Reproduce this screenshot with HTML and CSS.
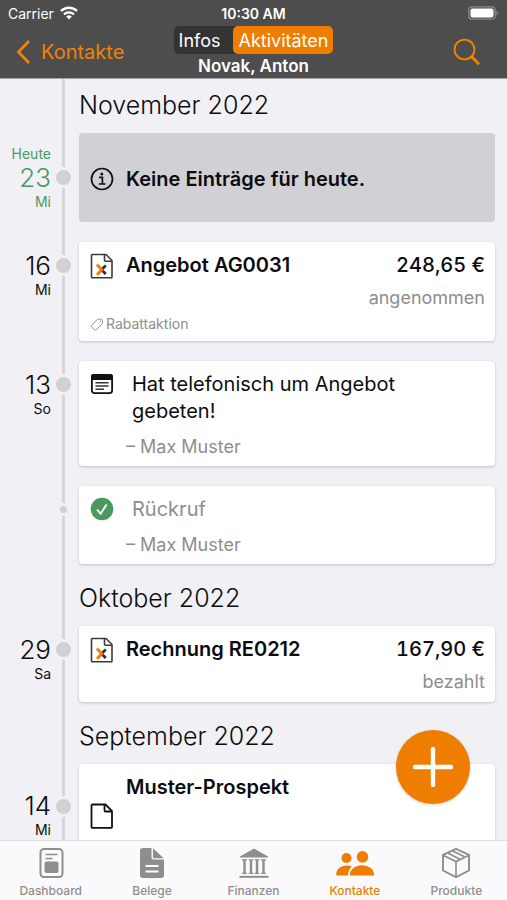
FILE: index.html
```html
<!DOCTYPE html>
<html lang="de">
<head>
<meta charset="utf-8">
<meta name="viewport" content="width=device-width, initial-scale=1">
<title>Novak, Anton</title>
<link rel="stylesheet" href="styles.css">
</head>
<body>
<svg class="symbols" aria-hidden="true">
  <symbol id="doc-x" viewBox="0 0 24 26">
    <path d="M2 1.500h14l6 6V24a.8.8 0 0 1-.8.8H2.300a.8.8 0 0 1-.8-.8V2.300a.8.8 0 0 1 .8-.8z" fill="none" stroke="#3c3c3c" stroke-width="1.600"/>
    <path d="M14.500 1.500v5.700a1 1 0 0 0 1 1H22" fill="none" stroke="#3c3c3c" stroke-width="1.600"/>
    <path d="M11.500 16.700l4.300-4.200M11.500 16.700l4.300 4.300" fill="none" stroke="#333" stroke-width="2.800"/>
    <path d="M6.500 12.700H8l3.700 4L8 20.800H6.500" fill="none" stroke="#ef7d00" stroke-width="2.800"/>
  </symbol>
</svg>
<div class="app">
  <header class="top">
    <div class="status">
      <span class="carrier">Carrier
        <svg width="18" height="14" viewBox="0 0 18 14" aria-hidden="true"><path d="M1 5a11.500 11.500 0 0 1 16 0" fill="none" stroke="#fff" stroke-width="2.400"/><path d="M4 8.300a7.200 7.200 0 0 1 10 0" fill="none" stroke="#fff" stroke-width="2.300"/><path d="M6.200 10.600a4 4 0 0 1 5.600 0L9 13.600z" fill="#fff"/></svg>
      </span>
      <time class="clock">10:30 AM</time>
      <svg class="battery" width="31" height="14" viewBox="0 0 31 14" aria-hidden="true"><rect x=".8" y=".8" width="26.400" height="12.400" rx="3.500" fill="none" stroke="#8b8b8b" stroke-width="1.200"/><rect x="2.500" y="2.500" width="23" height="9" rx="2" fill="#fff"/><path d="M28.500 4.500c2 .8 2 4.200 0 5z" fill="#8b8b8b"/></svg>
    </div>
    <div class="navbar">
      <a class="back" href="#">
        <svg width="15" height="26" viewBox="0 0 15 26" aria-hidden="true"><path d="M13 2L2.500 13 13 24" fill="none" stroke="#f08300" stroke-width="2.800"/></svg>
        Kontakte
      </a>
      <div class="middle">
        <div class="segments">
          <button class="segment" type="button" aria-pressed="false">Infos</button>
          <button class="segment active" type="button" aria-pressed="true">Aktivitäten</button>
        </div>
        <h1 class="title">Novak, Anton</h1>
      </div>
      <button class="search" type="button" aria-label="Suchen">
        <svg width="28" height="28" viewBox="0 0 28 28" aria-hidden="true"><circle cx="11.500" cy="11.500" r="9.900" fill="none" stroke="#f08300" stroke-width="1.800"/><path d="M18.500 18.500l7.500 7.800" stroke="#f08300" stroke-width="2.800"/></svg>
      </button>
    </div>
  </header>

  <main class="timeline">
    <section class="month">
      <h2 class="month-name">November 2022</h2>
      <ol class="entries">
        <li class="entry centered">
          <div class="date today"><span class="weekday">Heute</span><span class="day">23</span><span class="weekday">Mi</span></div>
          <span class="dot"></span>
          <article class="card notice">
            <svg class="icon" width="24" height="24" viewBox="0 0 24 24" aria-hidden="true"><circle cx="12" cy="12" r="10.500" fill="none" stroke="#111" stroke-width="1.700"/><circle cx="11.800" cy="7" r="1.500" fill="#111"/><path d="M9 10.300h3.400v6.500M8.800 17h6.700" fill="none" stroke="#111" stroke-width="1.700"/></svg>
            <h3 class="headline">Keine Einträge für heute.</h3>
          </article>
        </li>
        <li class="entry">
          <div class="date"><span class="day">16</span><span class="weekday">Mi</span></div>
          <span class="dot"></span>
          <article class="card">
            <svg class="icon" width="24" height="26" aria-hidden="true"><use href="#doc-x"/></svg>
            <h3 class="headline">Angebot AG0031</h3>
            <p class="amount">248,65 €</p>
            <p class="state">angenommen</p>
            <p class="tag">
              <svg width="14" height="14" viewBox="0 0 14 14" aria-hidden="true"><path d="M1.500 8.300L7.300 2.500Q8 2 9 2l2.300.3q1 .2 1.100 1.100l.1 2.200q0 .9-.6 1.500L6.300 12.600q-.9.700-1.700 0L1.500 9.900q-.7-.8 0-1.600z" fill="none" stroke="#8e8e8e"/><circle cx="10.300" cy="4.300" r=".7" fill="#8e8e8e"/></svg>
              Rabattaktion
            </p>
          </article>
        </li>
        <li class="entry">
          <div class="date"><span class="day">13</span><span class="weekday">So</span></div>
          <span class="dot"></span>
          <article class="card">
            <svg class="icon" width="24" height="24" viewBox="0 0 24 24" aria-hidden="true"><rect x="1.900" y="2.900" width="20.200" height="18.200" rx="2.500" fill="none" stroke="#111" stroke-width="1.800"/><path d="M1 8V4.500A2.500 2.500 0 0 1 3.500 2h17A2.500 2.500 0 0 1 23 4.500V8z" fill="#111"/><path d="M5.500 10.800h13M5.500 14h13M5.500 17.200h8.500" stroke="#333" stroke-width="1.600"/></svg>
            <p class="note">Hat telefonisch um Angebot gebeten!</p>
            <p class="author">– Max Muster</p>
          </article>
        </li>
        <li class="entry">
          <span class="dot small"></span>
          <article class="card">
            <svg class="icon" width="24" height="24" viewBox="0 0 24 24" aria-hidden="true"><circle cx="12" cy="12" r="11.300" fill="#4a9a5d"/><path d="M7 12.500l3.600 4.200L16.600 7.500" fill="none" stroke="#fff" stroke-width="1.900"/></svg>
            <p class="note done">Rückruf</p>
            <p class="author">– Max Muster</p>
          </article>
        </li>
      </ol>
    </section>

    <section class="month">
      <h2 class="month-name">Oktober 2022</h2>
      <ol class="entries">
        <li class="entry">
          <div class="date"><span class="day">29</span><span class="weekday">Sa</span></div>
          <span class="dot"></span>
          <article class="card">
            <svg class="icon" width="24" height="26" aria-hidden="true"><use href="#doc-x"/></svg>
            <h3 class="headline">Rechnung RE0212</h3>
            <p class="amount">167,90 €</p>
            <p class="state">bezahlt</p>
          </article>
        </li>
      </ol>
    </section>

    <section class="month">
      <h2 class="month-name">September 2022</h2>
      <ol class="entries">
        <li class="entry tall">
          <div class="date"><span class="day">14</span><span class="weekday">Mi</span></div>
          <span class="dot"></span>
          <article class="card">
            <svg class="icon" width="24" height="26" viewBox="0 0 24 26" aria-hidden="true"><path d="M2.500 1.500H15.500l6.500 6.500V24a.8.8 0 0 1-.8.8H2.300a.8.8 0 0 1-.8-.8V2.500a1 1 0 0 1 1-1z" fill="none" stroke="#111" stroke-width="1.800"/><path d="M14.500 1.500v6a1 1 0 0 0 1 1H22" fill="none" stroke="#111" stroke-width="1.800"/></svg>
            <h3 class="headline">Muster-Prospekt</h3>
          </article>
        </li>
      </ol>
    </section>
  </main>

  <button class="add" type="button" aria-label="Neue Aktivität">
    <svg width="40" height="40" viewBox="0 0 40 40" aria-hidden="true"><path d="M20 2v36M2 20h36" stroke="#fff" stroke-width="4.400" stroke-linecap="round"/></svg>
  </button>

  <nav class="tabs">
    <a class="tab" href="#">
      <svg width="32" height="32" viewBox="0 0 32 32" aria-hidden="true"><rect x="5.500" y="2" width="22" height="28" rx="3.500" fill="none" stroke="#8e8e8e" stroke-width="2"/><path d="M10.500 7.500h12M10.500 11.500h7" stroke="#8e8e8e" stroke-width="1.500"/><rect x="9.500" y="14.500" width="14" height="11.500" rx="2" fill="#8e8e8e"/></svg>
      Dashboard
    </a>
    <a class="tab" href="#">
      <svg width="32" height="32" viewBox="0 0 32 32" aria-hidden="true"><path d="M4 4a3 3 0 0 1 3-3h8.500v9a2.500 2.500 0 0 0 2.500 2.500h10V28a3 3 0 0 1-3 3H7a3 3 0 0 1-3-3z" fill="#8e8e8e"/><path d="M17 1.200L27.700 11.300H18.500a1.500 1.500 0 0 1-1.500-1.500z" fill="#8e8e8e"/><path d="M9.500 19h13M9.500 24.500h13" stroke="#fff" stroke-width="1.800"/></svg>
      Belege
    </a>
    <a class="tab" href="#">
      <svg width="32" height="32" viewBox="0 0 32 32" aria-hidden="true"><path d="M2 10.500v-1L16 1.500l14 8v1z" fill="#8e8e8e"/><path d="M4 12.900h5M10.700 12.900h4.600M16.700 12.900h4.600M23 12.900h5M4 26.300h5M10.700 26.300h4.600M16.700 26.300h4.600M23 26.300h5" stroke="#8e8e8e" stroke-width="1.300"/><path d="M6.500 12.500V26M13 12.500V26M19 12.500V26M25.500 12.500V26" stroke="#8e8e8e" stroke-width="2.400"/><path d="M1.500 29.800h29" stroke="#8e8e8e" stroke-width="2"/></svg>
      Finanzen
    </a>
    <a class="tab current" href="#" aria-current="page">
      <svg width="40" height="32" viewBox="0 0 40 32" aria-hidden="true"><g fill="#ef7d00"><circle cx="11.500" cy="11" r="5"/><circle cx="27.500" cy="9.800" r="5.800"/><path d="M1.200 27.500C1.500 22 5.500 18.500 11.500 18.500c2.200 0 4 .4 5.400 1.300-2.300 1.900-3.700 4.500-4 8.700H2.200c-.7 0-1-.4-1-1z"/><path d="M14.800 27.300c.6-5.200 5.700-9 12.200-9s11.600 3.800 12.200 9c.1.800-.4 1.200-1.200 1.200H16c-.8 0-1.300-.4-1.200-1.200z"/></g></svg>
      Kontakte
    </a>
    <a class="tab" href="#">
      <svg width="32" height="32" viewBox="0 0 32 32" aria-hidden="true"><path d="M16 1.800l13 6v15.700L16 30.200 3 23.500V7.800z" fill="none" stroke="#8e8e8e" stroke-width="1.900" stroke-linejoin="round"/><path d="M3 8.300l13 6.200 13-6.200M16 14.500v15.500M12.300 3.700l12.200 6M7.700 6l12.300 6.300" fill="none" stroke="#8e8e8e" stroke-width="1.600"/></svg>
      Produkte
    </a>
  </nav>
</div>
</body>
</html>
```
FILE: styles.css
```css
* {
  box-sizing: border-box;
}

body,
h1,
h2,
h3,
p,
ol {
  margin: 0;
  padding: 0;
}

body {
  font-family: Inter, "Liberation Sans", sans-serif;
  color: #0c0c0e;
  background: #f1f0f5;
}

button {
  border: 0;
  padding: 0;
  font: inherit;
  background: none;
}

a {
  color: inherit;
  text-decoration: none;
}

svg {
  display: block;
  flex: none;
}

.symbols {
  display: none;
}

.app {
  position: relative;
  display: flex;
  flex-direction: column;
  height: 100vh;
}

/* Header */

.top {
  background: #4d4d4d;
  color: #fff;
  border-bottom: 1px solid #a6a6a8;
}

.status,
.navbar {
  display: grid;
  grid-template-columns: 1fr auto 1fr;
}

.status {
  align-items: center;
  height: 26px;
  padding: 0 8px;
  font-size: 14px;
}

.carrier {
  display: flex;
  align-items: center;
  gap: 6px;
}

.clock {
  font-weight: 600;
}

.battery {
  justify-self: end;
}

.navbar {
  align-items: center;
  padding: 0 16px;
}

.back {
  display: flex;
  align-items: center;
  gap: 10px;
  font-size: 20px;
  color: #f08300;
}

.middle {
  text-align: center;
}

.segments {
  display: flex;
  gap: 1px;
  border-radius: 5px;
  background: #333;
}

.segment {
  height: 28px;
  padding: 0 5px;
  border-radius: 5px;
  font-size: 18px;
  color: #fff;
}

.segment:first-child {
  padding-right: 12px;
}

.segment.active {
  background: #ef7d00;
}

.title {
  font-size: 17px;
  line-height: 24px;
  font-weight: 600;
}

.search {
  justify-self: end;
  padding-right: 10px;
}

/* Timeline */

.timeline {
  position: relative;
  flex: 1;
  min-height: 0;
  overflow: hidden;
  padding: 10px 12px 0 0;
}

.timeline::before {
  content: "";
  position: absolute;
  top: 0;
  bottom: 0;
  left: 62px;
  width: 3px;
  background: #d6d6d9;
}

.month + .month {
  margin-top: 18px;
}

.month-name {
  padding: 0 0 12px 79px;
  font-size: 25px;
  line-height: 32px;
  font-weight: 300;
}

.entries {
  display: flex;
  flex-direction: column;
  gap: 20px;
  list-style: none;
}

.entry {
  position: relative;
  display: grid;
  grid-template-columns: 51px 25px 1fr;
  align-items: start;
}

.date {
  display: flex;
  flex-direction: column;
  padding-top: 10px;
  text-align: right;
}

.day {
  font-size: 26px;
  line-height: 28px;
  font-weight: 300;
}

.weekday {
  font-size: 14px;
  line-height: 20px;
}

.today {
  color: #4a9a5d;
}

.dot {
  grid-column: 2;
  justify-self: center;
  width: 21px;
  height: 21px;
  margin-top: 13px;
  border: 3px solid #f1f0f5;
  border-radius: 50%;
  background: #d1d1d1;
}

.dot.small {
  width: 13px;
  height: 13px;
  margin-top: 17px;
}

.card {
  grid-column: 3;
  display: grid;
  grid-template-columns: 24px 1fr auto;
  column-gap: 12px;
  margin-left: 3px;
  padding: 8px 10px 6px 11px;
  border-radius: 4px;
  background: #fff;
  box-shadow: 0 1px 3px rgba(0, 0, 0, 0.2);
}

.icon {
  grid-row: 1;
  align-self: start;
  margin-top: 3px;
}

.headline,
.amount {
  font-size: 20px;
  line-height: 30px;
}

.headline {
  font-weight: 600;
}

.amount {
  font-weight: 500;
  font-variant-numeric: tabular-nums;
}

.state {
  grid-column: 2 / 4;
  padding-top: 4px;
  font-size: 18px;
  line-height: 28px;
  text-align: right;
  color: #8e8e8e;
}

.tag {
  grid-column: 1 / 4;
  display: flex;
  align-items: center;
  gap: 2px;
  font-size: 14px;
  line-height: 23px;
  color: #8e8e8e;
}

.note {
  grid-column: 2 / 4;
  max-width: 290px;
  padding: 2px 0 0 6px;
  font-size: 20px;
  line-height: 27px;
}

.done {
  color: #8e8e8e;
}

.author {
  grid-column: 2 / 4;
  padding-top: 8px;
  font-size: 18px;
  line-height: 27px;
  color: #8e8e8e;
}

.centered {
  align-items: center;
}

.centered .date {
  padding-top: 0;
}

.centered .dot {
  margin-top: 0;
}

.notice {
  align-items: center;
  min-height: 89px;
  background: #d1d0d5;
  box-shadow: none;
}

.notice .icon {
  align-self: center;
  margin-top: 0;
}

.tall .date {
  padding-top: 28px;
}

.tall .dot {
  margin-top: 32px;
}

.tall .card {
  min-height: 85px;
}

.tall .icon {
  align-self: center;
  margin-top: 16px;
}

/* Floating action button */

.add {
  position: absolute;
  right: 37px;
  bottom: 96px;
  display: grid;
  place-items: center;
  width: 74px;
  height: 74px;
  border-radius: 50%;
  background: #ef7d00;
  box-shadow: 0 1px 3px rgba(0, 0, 0, 0.2);
}

/* Tab bar */

.tabs {
  display: flex;
  height: 60px;
  padding-top: 6px;
  border-top: 1px solid #dcdcde;
  background: #fafafc;
}

.tab {
  flex: 1;
  display: flex;
  flex-direction: column;
  align-items: center;
  gap: 4px;
  font-size: 12px;
  line-height: 16px;
  font-weight: 500;
  color: #8e8e8e;
}

.current {
  color: #ef7d00;
}
```
